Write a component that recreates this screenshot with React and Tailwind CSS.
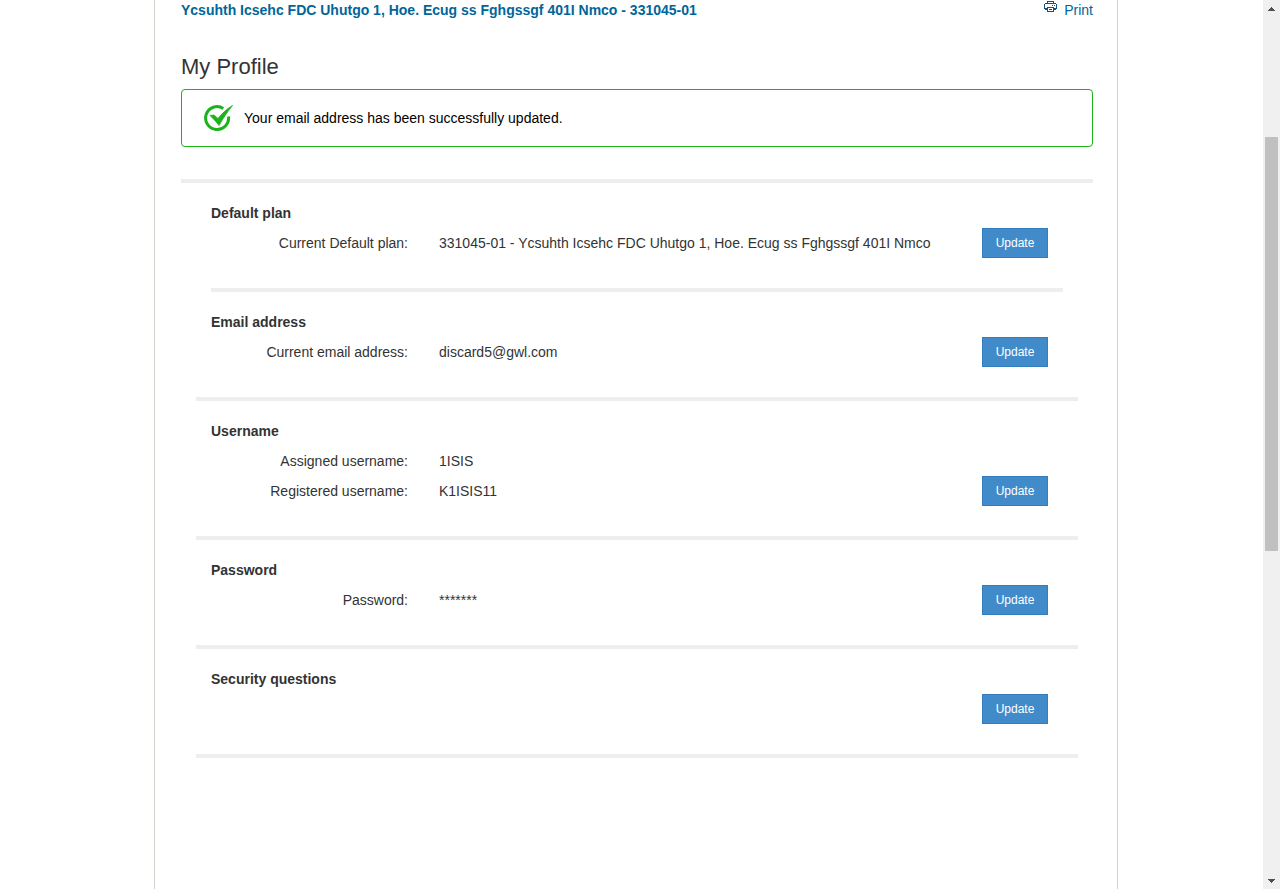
import React from "react";

const sections = [
  {
    title: "Default plan",
    rows: [["Current Default plan:", "331045-01 - Ycsuhth Icsehc FDC Uhutgo 1, Hoe. Ecug ss Fghgssgf 401I Nmco"]],
    inset: "mx-[30px]",
  },
  { title: "Email address", rows: [["Current email address:", "discard5@gwl.com"]], inset: "mx-[15px]" },
  {
    title: "Username",
    rows: [
      ["Assigned username:", "1ISIS"],
      ["Registered username:", "K1ISIS11"],
    ],
    inset: "mx-[15px]",
  },
  { title: "Password", rows: [["Password:", "*******"]], inset: "mx-[15px]" },
  { title: "Security questions", rows: [], inset: "mx-[15px]" },
];

function PrinterIcon() {
  return (
    <svg width="13" height="11" viewBox="0 0 13 11" fill="#1b4f7c" shapeRendering="crispEdges" aria-hidden="true">
      <path d="M3 0h7v1H3zM3 1h1v1H3zM9 1h1v1H9zM1 2h11v1H1zM0 3h1v5H0zM12 3h1v5h-1zM8 4h1v1H8zM10 4h1v1h-1zM3 6h7v1H3zM1 7h3v2H1zM9 7h3v2H9zM3 9h1v2H3zM9 9h1v2H9zM3 10h7v1H3zM5 8h3v1H5z" />
    </svg>
  );
}

function CheckIcon() {
  return (
    <svg width="30" height="28" viewBox="0 0 30 28" fill="none" aria-hidden="true">
      <path d="M19.3 4.400A11.500 11.500 0 1 0 24.500 12.500" stroke="#1ab31a" strokeWidth="3" />
      <path
        d="M6 11.500L10 11L14 14.500C18 9.500 22.500 5 28.500 1.500C24 7 19.500 13.500 15 21.500C12.500 18 9.500 15 6 11.500z"
        fill="#1ab31a"
        stroke="#1ab31a"
        strokeWidth="0.8"
      />
    </svg>
  );
}

function Section({ title, rows, inset }) {
  return (
    <section>
      <div className="px-[30px] pt-5 pb-[30px]">
        <h2 className="mb-[5px] text-sm leading-5 font-bold">{title}</h2>
        <div className="flex items-end">
          <dl className="min-w-0 flex-1">
            {rows.map(([label, value]) => (
              <div key={label} className="flex min-h-[30px] items-center gap-[31px]">
                <dt className="w-[197px] shrink-0 text-right">{label}</dt>
                <dd>{value}</dd>
              </div>
            ))}
          </dl>
          <button
            type="button"
            aria-label={"Update " + title}
            className="mr-[15px] h-[30px] w-[66px] shrink-0 border border-[#357ebd] bg-[#428bca] text-xs text-white"
          >
            Update
          </button>
        </div>
      </div>
      <div className={"h-1 bg-[#eeeeee] " + inset} />
    </section>
  );
}

export default function App() {
  return (
    <div className="flex min-h-screen bg-white font-['Liberation_Sans',Arial,sans-serif] text-sm leading-5 text-[#333333]">
      <div className="flex min-w-0 flex-1 justify-center pl-[9px]">
        <main className="w-full max-w-[964px] border-x border-[#d5d5ce] pr-6 pl-[26px]">
          <header className="flex justify-between font-normal text-[#006699]">
            <a href="#plan" className="font-bold">
              Ycsuhth Icsehc FDC Uhutgo 1, Hoe. Ecug ss Fghgssgf 401I Nmco - 331045-01
            </a>
            <a href="#print" className="flex gap-[7px]">
              <span className="pt-px">
                <PrinterIcon />
              </span>
              Print
            </a>
          </header>
          <h1 className="mt-[33px] text-[22px] leading-7">My Profile</h1>
          <div
            role="status"
            className="mt-2 flex h-[58px] items-center gap-[10px] rounded border border-[#1ab31a] pl-[22px] text-black"
          >
            <CheckIcon />
            <p>Your email address has been successfully updated.</p>
          </div>
          <div className="mt-8 h-1 bg-[#eeeeee]" />
          {sections.map((s) => (
            <Section key={s.title} {...s} />
          ))}
        </main>
      </div>
      <div className="flex w-[17px] shrink-0 flex-col bg-[#f0f0f0]" aria-hidden="true">
        <div className="flex h-[17px] items-center justify-center">
          <svg width="7" height="4" viewBox="0 0 7 4" fill="#505050" shapeRendering="crispEdges">
            <path d="M3 0h1v1H3zM2 1h3v1H2zM1 2h5v1H1zM0 3h7v1H0z" />
          </svg>
        </div>
        <div className="grow-[120]" />
        <div className="mx-[2px] grow-[414] bg-[#c0c0c0]" />
        <div className="grow-[321]" />
        <div className="flex h-[17px] items-center justify-center">
          <svg width="7" height="4" viewBox="0 0 7 4" fill="#505050" shapeRendering="crispEdges">
            <path d="M0 0h7v1H0zM1 1h5v1H1zM2 2h3v1H2zM3 3h1v1H3z" />
          </svg>
        </div>
      </div>
    </div>
  );
}
